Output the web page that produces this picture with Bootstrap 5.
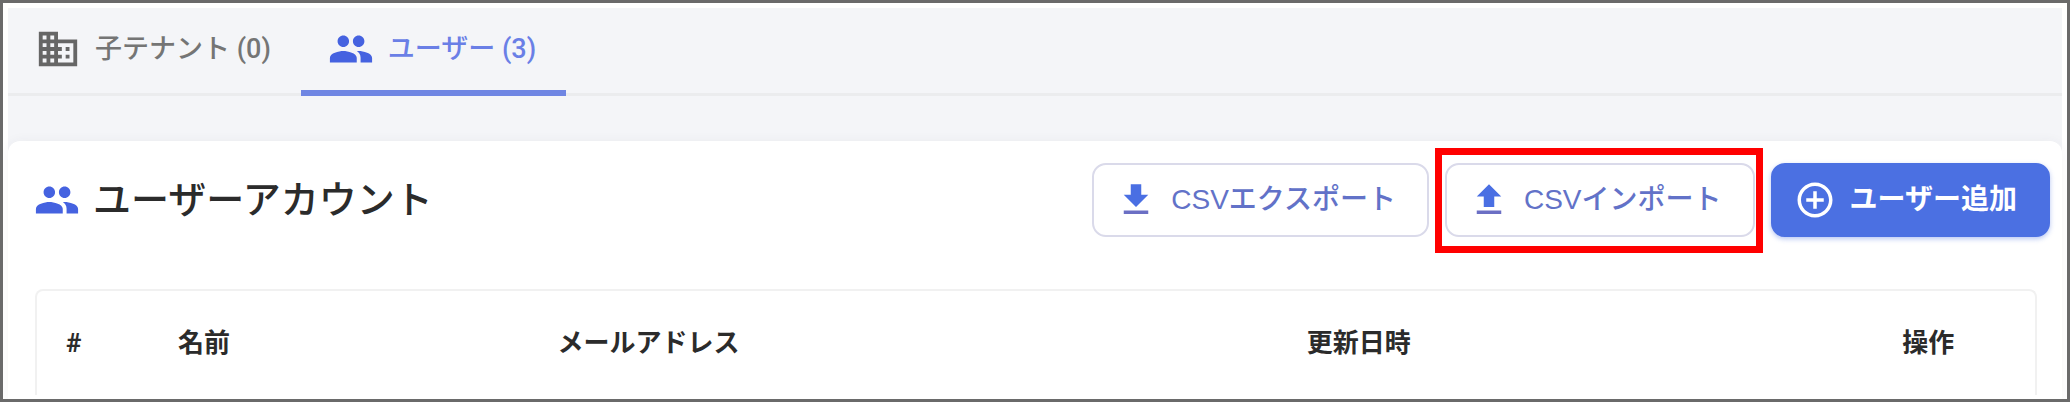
<!DOCTYPE html>
<html lang="ja">
<head>
<meta charset="utf-8">
<meta name="viewport" content="width=device-width, initial-scale=1">
<title>ユーザーアカウント</title>
<link href="https://cdn.jsdelivr.net/npm/bootstrap@5.3.0/dist/css/bootstrap.min.css" rel="stylesheet">
<style>
  body {
    font-family: Roboto, "Noto Sans CJK JP", sans-serif;
    color: #2b2b2b;
    background: #fff;
    border: 3px solid #6a6a6a;
    padding: 5px 5px 0;
  }
  .page-bg { background: #f4f5f8; }
  .tenant-tabs { border-bottom: 3px solid #ebecee; }
  .tenant-tabs .nav-link {
    position: relative;
    gap: 14px;
    padding: 18px 30px 21px 27px;
    font-size: 27px;
    line-height: 46px;
    font-weight: 500;
    color: #757575;
  }
  .tenant-tabs .nav-link svg { color: #666; }
  .tenant-tabs .nav-link.active { color: #6a7fe6; }
  .tenant-tabs .nav-link.active svg, .title-icon { color: #4562e0; }
  .tenant-tabs .nav-link.active::after {
    content: "";
    position: absolute;
    inset: auto 0 -3px 0;
    height: 6px;
    background: #6f86e3;
  }
  svg { fill: currentColor; flex: none; }
  .icon-lg { width: 46px; height: 46px; }
  .icon-md { width: 42px; height: 42px; }
  .account-panel {
    margin-top: 45px;
    background: #fff;
    border-radius: 12px 12px 0 0;
    box-shadow: 0 0 12px rgba(60, 64, 80, .05);
  }
  .panel-head { padding: 22px 12px 0 26px; }
  .panel-title { font-size: 38px; line-height: 46px; gap: 13px; font-weight: 500; }
  .tool-btn {
    font-family: "Liberation Sans", "Noto Sans CJK JP", sans-serif;
    font-size: 28px;
    line-height: 42px;
    font-weight: 500;
    gap: 14px;
    padding: 14px 31px 14px 21px;
    border: 2px solid #dadaea;
    border-radius: 14px;
    color: #6272c8;
    background: #fff;
  }
  .tool-btn svg { color: #4a6fe3; }
  .tool-btn.add-btn {
    font-weight: 700;
    color: #fff;
    background: #4b70e2;
    border-color: #4b70e2;
    box-shadow: 0 2px 5px rgba(75, 112, 226, .4);
  }
  .tool-btn.add-btn svg { color: #fff; }
  .callout-box {
    position: absolute;
    inset: -15px -8px -16px -10px;
    border: 7px solid #f00;
    pointer-events: none;
  }
  .user-table {
    margin: 52px 25px 5px 27px;
    border: 2px solid #f1f1f1;
    border-bottom: 0;
    border-radius: 8px 8px 0 0;
  }
  .user-table th {
    padding: 32px 0 32px 29px;
    font-size: 26px;
    line-height: 40px;
    border: 0;
    color: #2b2b2b;
    white-space: nowrap;
  }
  .c-num { width: 5.6%; } .c-name { width: 19%; } .c-mail { width: 37.5%; } .c-date { width: 29.8%; }
</style>
</head>
<body class="vh-100 overflow-hidden">
<svg class="d-none" aria-hidden="true">
  <symbol id="i-people" viewBox="0 0 24 24"><path d="M16 11c1.66 0 2.99-1.34 2.99-3S17.660 5 16 5s-3 1.340-3 3 1.340 3 3 3zm-8 0c1.660 0 2.990-1.340 2.990-3S9.660 5 8 5 5 6.340 5 8s1.340 3 3 3zm0 2c-2.330 0-7 1.170-7 3.500V19h14v-2.500c0-2.330-4.670-3.500-7-3.500zm8 0c-.290 0-.620.020-.970.050 1.160.840 1.970 1.970 1.970 3.450V19h6v-2.500c0-2.330-4.670-3.500-7-3.500z"/></symbol>
  <symbol id="i-building" viewBox="0 0 24 24"><path d="M12 7V3H2v18h20V7H12zM6 19H4v-2h2v2zm0-4H4v-2h2v2zm0-4H4V9h2v2zm0-4H4V5h2v2zm4 12H8v-2h2v2zm0-4H8v-2h2v2zm0-4H8V9h2v2zm0-4H8V5h2v2zm10 12h-8v-2h2v-2h-2v-2h2v-2h-2V9h8v10zm-2-8h-2v2h2v-2zm0 4h-2v2h2v-2z"/></symbol>
  <symbol id="i-download" viewBox="0 0 24 24"><path d="M19 9h-4V3H9v6H5l7 7 7-7z"/><path fill="#6b6fc4" d="M5 18h14v2H5z"/></symbol>
  <symbol id="i-upload" viewBox="0 0 24 24"><path d="M5 10h4v6h6v-6h4l-7-7z"/><path fill="#6b6fc4" d="M5 18h14v2H5z"/></symbol>
  <symbol id="i-add" viewBox="0 0 24 24"><path d="M13 7h-2v4H7v2h4v4h2v-4h4v-2h-4V7zm-1-5C6.480 2 2 6.480 2 12s4.480 10 10 10 10-4.480 10-10S17.520 2 12 2zm0 18c-4.410 0-8-3.590-8-8s3.590-8 8-8 8 3.590 8 8-3.590 8-8 8z"/></symbol>
</svg>
<div class="page-bg h-100 d-flex flex-column">
  <nav class="tenant-tabs nav">
    <a class="nav-link d-flex align-items-center" href="#tenants"><svg class="icon-lg"><use href="#i-building"/></svg><span>子テナント (0)</span></a>
    <a class="nav-link active d-flex align-items-center" href="#users" aria-current="page"><svg class="icon-lg"><use href="#i-people"/></svg><span>ユーザー (3)</span></a>
  </nav>
  <main class="account-panel flex-grow-1 d-flex flex-column" id="users">
    <div class="panel-head d-flex justify-content-between align-items-center">
      <h1 class="panel-title d-flex align-items-center mb-0"><svg class="icon-lg title-icon"><use href="#i-people"/></svg><span>ユーザーアカウント</span></h1>
      <div class="d-flex gap-3">
        <button type="button" class="btn tool-btn d-flex align-items-center"><svg class="icon-md"><use href="#i-download"/></svg><span>CSVエクスポート</span></button>
        <div class="position-relative">
          <button type="button" class="btn tool-btn d-flex align-items-center"><svg class="icon-md"><use href="#i-upload"/></svg><span>CSVインポート</span></button>
          <div class="callout-box"></div>
        </div>
        <button type="button" class="btn tool-btn add-btn d-flex align-items-center"><svg class="icon-md"><use href="#i-add"/></svg><span>ユーザー追加</span></button>
      </div>
    </div>
    <div class="user-table flex-grow-1">
      <table class="table table-borderless mb-0">
        <thead>
          <tr><th scope="col" class="c-num">#</th><th scope="col" class="c-name">名前</th><th scope="col" class="c-mail">メールアドレス</th><th scope="col" class="c-date">更新日時</th><th scope="col">操作</th></tr>
        </thead>
      </table>
    </div>
  </main>
</div>
<script src="https://cdn.jsdelivr.net/npm/bootstrap@5.3.0/dist/js/bootstrap.bundle.min.js"></script>
</body>
</html>
